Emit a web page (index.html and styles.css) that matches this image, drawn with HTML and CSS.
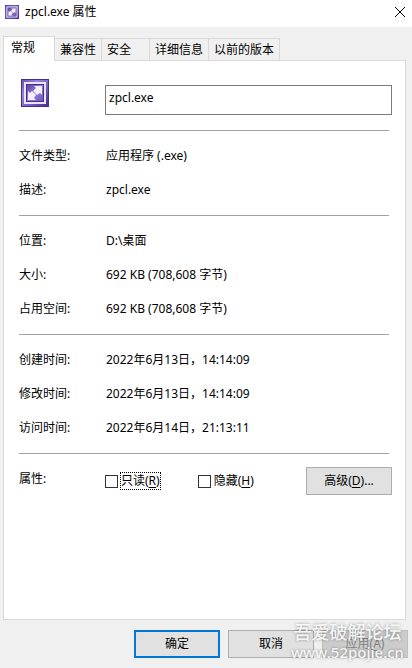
FILE: index.html
```html
<!DOCTYPE html>
<html lang="zh-CN">
<head>
    <meta charset="UTF-8">
    <meta name="viewport" content="width=device-width, initial-scale=1.0">
    <title>zpcl.exe 属性</title>
    <link rel="stylesheet" href="styles.css">
</head>
<body>
    <svg class="defs" aria-hidden="true">
        <defs>
            <linearGradient id="frame" x1="0" y1="0" x2="1" y2="1">
                <stop offset="0" stop-color="#6a50bc"/>
                <stop offset="0.3" stop-color="#9484d8"/>
                <stop offset="0.6" stop-color="#7a62c6"/>
                <stop offset="1" stop-color="#4a2a8e"/>
            </linearGradient>
            <linearGradient id="arrow" x1="0" y1="0" x2="1" y2="1">
                <stop offset="0" stop-color="#5b40a6"/>
                <stop offset="0.5" stop-color="#9482d0"/>
                <stop offset="1" stop-color="#6d54b6"/>
            </linearGradient>
            <symbol id="app-icon" viewBox="0 0 28 28">
                <rect width="28" height="28" fill="#4a2d94"/>
                <rect x="1" y="1" width="26" height="26" fill="url(#frame)"/>
                <rect x="3" y="3" width="22" height="22" fill="#e9e4f8"/>
                <rect x="5" y="5" width="18" height="18" fill="#4a2d94"/>
                <rect x="6" y="6" width="16" height="16" fill="url(#arrow)"/>
                <path d="M13 7h8v9l-2-2-3 2-4-4 3-3z" fill="#f2effb"/>
                <path d="M7 12v9h8l-2-2 2-3-4-4-2 2z" fill="#f2effb"/>
            </symbol>
        </defs>
    </svg>

    <div class="dialog">
        <header class="titlebar">
            <svg class="title-icon" aria-hidden="true"><use href="#app-icon"/></svg>
            <h1>zpcl.exe 属性</h1>
            <button class="close" aria-label="关闭">
                <svg viewBox="0 0 12 12" width="12" height="12"><path d="M1 1l10 10M11 1L1 11" stroke="#000" fill="none"/></svg>
            </button>
        </header>

        <div class="tabs" role="tablist">
            <button class="tab active" role="tab" aria-selected="true">常规</button>
            <button class="tab" role="tab">兼容性</button>
            <button class="tab security" role="tab">安全</button>
            <button class="tab" role="tab">详细信息</button>
            <button class="tab" role="tab">以前的版本</button>
        </div>

        <main class="panel">
            <div class="file-name">
                <svg class="file-icon" aria-hidden="true"><use href="#app-icon"/></svg>
                <input type="text" value="zpcl.exe" aria-label="文件名">
            </div>

            <dl class="group">
                <dt>文件类型:</dt><dd>应用程序 (.exe)</dd>
                <dt>描述:</dt><dd>zpcl.exe</dd>
            </dl>
            <dl class="group">
                <dt>位置:</dt><dd>D:\桌面</dd>
                <dt>大小:</dt><dd>692 KB (708,608 字节)</dd>
                <dt>占用空间:</dt><dd>692 KB (708,608 字节)</dd>
            </dl>
            <dl class="group">
                <dt>创建时间:</dt><dd>2022年6月13日，14:14:09</dd>
                <dt>修改时间:</dt><dd>2022年6月13日，14:14:09</dd>
                <dt>访问时间:</dt><dd>2022年6月14日，21:13:11</dd>
            </dl>
            <div class="group">
                <span>属性:</span>
                <div class="options">
                    <div class="check">
                        <input type="checkbox" id="readonly">
                        <label class="focused" for="readonly">只读(<u>R</u>)</label>
                    </div>
                    <div class="check">
                        <input type="checkbox" id="hidden">
                        <label for="hidden">隐藏(<u>H</u>)</label>
                    </div>
                    <button class="btn advanced">高级(<u>D</u>)...</button>
                </div>
            </div>
        </main>

        <footer class="actions">
            <button class="btn default">确定</button>
            <button class="btn">取消</button>
            <button class="btn" disabled>应用(<u>A</u>)</button>
        </footer>

        <div class="watermark">
            <span class="forum">吾爱破解论坛</span>
            <span class="site">www.52pojie.cn</span>
        </div>
    </div>
</body>
</html>
```

FILE: styles.css
```css
* {
    box-sizing: border-box;
}
body {
    margin: 0;
    background: #f0f0f0;
    color: #000;
    font: 12px/16px "Noto Sans", "Noto Sans CJK SC", sans-serif;
}
button, input {
    font: inherit;
    color: inherit;
}
u {
    text-underline-offset: 2px;
}
.defs {
    position: absolute;
    width: 0;
    height: 0;
}
.dialog {
    position: relative;
    display: flex;
    flex-direction: column;
    min-height: 100vh;
}

/* title bar */
.titlebar {
    display: flex;
    align-items: center;
    height: 27px;
    padding: 0 6px 4px 5px;
    background: #fff;
}
.title-icon {
    width: 14px;
    height: 14px;
}
h1 {
    flex: 1;
    margin: 0 0 0 6px;
    font-size: 12px;
    font-weight: normal;
}
.close {
    display: flex;
    padding: 0;
    border: 0;
    background: none;
}

/* tabs */
.tabs {
    display: flex;
    align-items: flex-end;
    margin: 9px 6px 0 3px;
}
.tab {
    height: 22px;
    margin-left: -1px;
    padding: 0 5px;
    border: 1px solid #d9d9d9;
    border-bottom: 0;
    background: #f0f0f0;
    text-align: left;
    white-space: nowrap;
}
.tab.security {
    padding-right: 18px;
}
.tab.active {
    position: relative;
    z-index: 1;
    height: 25px;
    margin: 0 0 -1px;
    padding: 0 19px 3px 7px;
    background: #fff;
}

/* general page */
.panel {
    flex: 1;
    margin: 0 6px 0 3px;
    padding: 18px 16px 18px 15px;
    border: 1px solid #d9d9d9;
    background: #fff;
}
.file-name {
    display: flex;
    align-items: flex-start;
    gap: 56px;
    margin: 0 -3px 15px 2px;
}
.file-icon {
    flex: none;
    width: 28px;
    height: 28px;
}
.file-name input {
    flex: 1;
    min-width: 0;
    height: 30px;
    margin-top: 6px;
    padding: 0 3px 6px;
    border: 1px solid #7a7a7a;
    border-radius: 0;
    background: #fff;
}
.group {
    display: grid;
    grid-template-columns: 87px 1fr;
    margin: 0;
    padding: 8px 0;
    border-top: 1px solid #a0a0a0;
    line-height: 34px;
}
.group dd {
    margin: 0;
}
.options {
    display: flex;
    align-items: center;
    height: 38px;
    margin: 0 -3px 0 -1px;
    line-height: 16px;
}
.check {
    display: flex;
    align-items: center;
    gap: 2px;
    margin-right: 37px;
}
.check:last-of-type {
    margin-right: 0;
}
.check input {
    appearance: none;
    width: 13px;
    height: 13px;
    margin: 0;
    border: 1px solid #333;
    background: #fff;
}
.check label {
    border: 1px solid transparent;
}
.check label.focused {
    border: 1px dotted #000;
}

/* buttons */
.btn {
    width: 86px;
    height: 28px;
    padding: 0;
    border: 1px solid #adadad;
    background: #e1e1e1;
}
.btn.default {
    border: 2px solid #0078d7;
}
.btn:disabled {
    border-color: #bfbfbf;
    background: #ccc;
    color: #838383;
}
.advanced {
    margin-left: auto;
}
.actions {
    display: flex;
    justify-content: flex-end;
    gap: 8px;
    padding: 10px 4px;
}

.watermark {
    position: absolute;
    right: 8px;
    bottom: 8px;
    display: flex;
    flex-direction: column;
    align-items: center;
    color: rgba(255, 255, 255, 0.9);
    font-weight: 500;
    text-shadow: 0 0 3px rgba(0, 0, 0, 0.4);
    pointer-events: none;
}
.forum {
    font-size: 18px;
    line-height: 24px;
}
.site {
    font-size: 15px;
    line-height: 16px;
}
```
